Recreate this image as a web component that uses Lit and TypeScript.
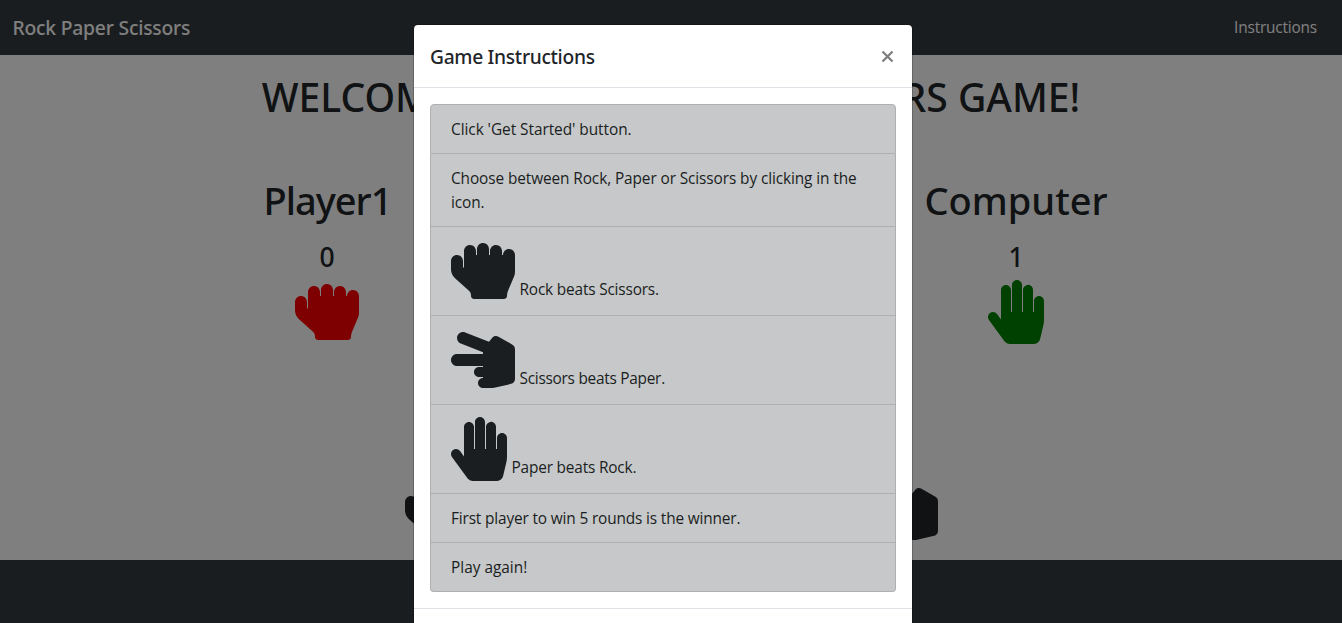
import { LitElement, html, css } from "lit";
import { customElement, property } from "lit/decorators.js";

const HANDS: Record<string, { width: number; path: string }> = {
  rock: {
    width: 512,
    path: "M464.8 80c-26.9-.4-48.8 21.2-48.8 48h-8V96.8c0-26.3-20.9-48.3-47.2-48.8-26.9-.4-48.8 21.2-48.8 48v32h-8V80.8c0-26.3-20.9-48.3-47.2-48.8-26.9-.4-48.8 21.2-48.8 48v48h-8V96.8c0-26.3-20.9-48.3-47.2-48.8-26.9-.4-48.8 21.2-48.8 48v136l-8-7.1v-48.1c0-26.3-20.9-48.3-47.2-48.8C21.9 127.6 0 149.2 0 176v66.4c0 27.4 11.7 53.5 32.2 71.8l111.7 99.3c10.2 9.1 16.1 22.2 16.1 35.9v6.7c0 13.3 10.7 24 24 24h240c13.3 0 24-10.7 24-24v-2.9c0-12.8 2.6-25.5 7.5-37.3l49-116.3c5-11.8 7.5-24.5 7.5-37.3V128.8c.1-26.4-20.8-48.4-47.2-48.8z",
  },
  paper: {
    width: 448,
    path: "M408.781 128.007C386.356 127.578 368 146.36 368 168.79V256h-8V79.79c0-22.43-18.356-41.212-40.781-40.783C297.488 39.423 280 57.169 280 79v177h-8V40.79C272 18.36 253.644-.422 231.219.007 209.488.423 192 18.169 192 40v216h-8V80.79c0-22.43-18.356-41.212-40.781-40.783C121.488 40.423 104 58.169 104 80v235.992l-31.648-43.519c-12.993-17.866-38.009-21.817-55.877-8.823-17.865 12.994-21.815 38.01-8.822 55.877l125.601 172.705A48 48 0 0 0 172.073 512h197.59c22.274 0 41.622-15.324 46.724-37.006l26.508-112.66a192.011 192.011 0 0 0 5.104-43.975V168c.001-21.831-17.487-39.577-39.218-39.993z",
  },
  scissors: {
    width: 512,
    path: "M216 440c0-22.092 17.909-40 40-40v-8h-32c-22.091 0-40-17.908-40-40s17.909-40 40-40h32v-8H48c-26.51 0-48-21.49-48-48s21.49-48 48-48h208v-13.572l-177.551-69.74c-24.674-9.694-36.818-37.555-27.125-62.228 9.693-24.674 37.554-36.817 62.228-27.124l190.342 74.765 24.872-31.09c12.306-15.381 33.978-19.515 51.081-9.741l112 64A40.002 40.002 0 0 1 512 168v240c0 18.562-12.77 34.686-30.838 38.937l-136 32A39.982 39.982 0 0 1 336 480h-80c-22.091 0-40-17.908-40-40z",
  },
};

@customElement("hand-icon")
class HandIcon extends LitElement {
  @property() name = "rock";

  static styles = css`
    :host { display: inline-block; height: 64px; line-height: 0; }
    svg { display: block; height: 64px; fill: currentColor; }
  `;

  render() {
    const hand = HANDS[this.name];
    return html`<svg width=${hand.width / 8} viewBox="0 0 ${hand.width} 512"><path d=${hand.path}></path></svg>`;
  }
}

@customElement("instructions-modal")
class InstructionsModal extends LitElement {
  static styles = css`
    :host {
      display: block; box-sizing: border-box; width: 500px;
      background: #fff; background-clip: padding-box;
      border: 1px solid rgba(0, 0, 0, 0.2); border-radius: 4.8px;
      color: #212529;
    }
    .head {
      display: flex; justify-content: space-between; align-items: flex-start;
      padding: 16px; border-bottom: 1px solid #dee2e6;
    }
    .title { margin: 0; font: 500 19.2px/30px "Noto Sans", sans-serif; letter-spacing: -0.3px; padding-top: 1px; height: 29px; }
    .close { border: 0; background: none; padding: 9px 2px 0 0; color: #7f7f7f; line-height: 0; }
    .close svg { display: block; stroke: currentColor; stroke-width: 2.3; fill: none; }
    .body { padding: 16px; }
    .list { list-style: none; margin: 0; padding: 0; }
    .item {
      padding: 13px 20px 11px; border: 1px solid #adafb1; border-top-width: 0;
      background: #c6c8ca; color: #1b1e21;
      font-size: 15.4px; line-height: 24px; letter-spacing: -0.1px;
    }
    .item:first-child { border-top-width: 1px; border-radius: 4px 4px 0 0; letter-spacing: -0.05px; }
    .item:last-child { border-radius: 0 0 4px 4px; letter-spacing: 0; }
    .pick { display: flex; gap: 4.5px; height: 64px; align-items: flex-start; margin: -1px 0 1px; letter-spacing: -0.18px; }
    .pick .label { padding-top: 39px; }
    .tight { letter-spacing: -0.26px; }
    .rounds { letter-spacing: -0.15px; }
    .foot { border-top: 1px solid #dee2e6; height: 70px; }
  `;

  render() {
    return html`
      <div class="head">
        <h5 class="title">Game Instructions</h5>
        <button class="close" aria-label="Close">
          <svg width="13" height="13" viewBox="0 0 13 13"><path d="M1.5 1.5L11.5 11.5M11.5 1.5L1.5 11.5"></path></svg>
        </button>
      </div>
      <div class="body">
        <ul class="list">
          <li class="item">Click 'Get Started' button.</li>
          <li class="item">Choose between Rock, Paper or Scissors by clicking in the icon.</li>
          <li class="item"><div class="pick"><hand-icon name="rock"></hand-icon><span class="label">Rock beats Scissors.</span></div></li>
          <li class="item"><div class="pick tight"><hand-icon name="scissors"></hand-icon><span class="label">Scissors beats Paper.</span></div></li>
          <li class="item"><div class="pick"><hand-icon name="paper"></hand-icon><span class="label">Paper beats Rock.</span></div></li>
          <li class="item rounds">First player to win 5 rounds is the winner.</li>
          <li class="item">Play again!</li>
        </ul>
      </div>
      <div class="foot"></div>
    `;
  }
}

@customElement("app-root")
class AppRoot extends LitElement {
  static styles = css`
    :host {
      display: block; position: relative; height: 623px; overflow: hidden;
      background: #fff; color: #212529;
      font-family: "Open Sans", "Noto Sans", sans-serif;
    }
    .page { display: flex; flex-direction: column; height: 100%; }
    .nav {
      display: flex; justify-content: space-between; align-items: center;
      height: 55px; box-sizing: border-box; padding: 0 25px 0 12.5px;
      background: #343a40; color: #fff;
    }
    .brand { font: 500 19.3px/30px "Noto Sans", sans-serif; letter-spacing: -0.2px; }
    .link { font-size: 15.4px; line-height: 24px; letter-spacing: -0.18px; }
    .main { height: 505px; box-sizing: border-box; padding-top: 18px; }
    .welcome { margin: 0; text-align: center; font: 500 39.1px/48px "Noto Sans", sans-serif; white-space: nowrap; }
    .players { display: flex; justify-content: space-between; margin: 56px 234px 0 235px; }
    .player { display: flex; flex-direction: column; align-items: center; width: 184px; }
    .name { margin: 0; font: 500 38px/46px "Noto Sans", sans-serif; }
    .you .name { letter-spacing: -1px; padding-left: 1px; }
    .score { font: 500 26.5px/34px "Noto Sans", sans-serif; margin: 17px 0 6px; }
    .red { color: #f00; }
    .green { color: green; }
    .choices { display: flex; justify-content: space-between; width: 533px; margin: 136px 0 0 405px; }
    .footer { flex: 1; background: #343a40; }
    .backdrop { position: absolute; inset: 0; background: rgba(0, 0, 0, 0.5); }
    .dialog { position: absolute; top: 24px; left: 413px; }
  `;

  render() {
    return html`
      <div class="page">
        <nav class="nav"><span class="brand">Rock Paper Scissors</span><span class="link">Instructions</span></nav>
        <main class="main">
          <h1 class="welcome">WELCOME TO ROCK PAPER SCISSORS GAME!</h1>
          <div class="players">
            <section class="player you">
              <h2 class="name">Player1</h2><div class="score">0</div>
              <hand-icon class="red" name="rock"></hand-icon>
            </section>
            <section class="player">
              <h2 class="name">Computer</h2><div class="score">1</div>
              <hand-icon class="green" name="paper"></hand-icon>
            </section>
          </div>
          <div class="choices">
            <hand-icon name="rock"></hand-icon>
            <hand-icon name="paper"></hand-icon>
            <hand-icon name="scissors"></hand-icon>
          </div>
        </main>
        <footer class="footer"></footer>
      </div>
      <div class="backdrop"></div>
      <instructions-modal class="dialog"></instructions-modal>
    `;
  }
}
